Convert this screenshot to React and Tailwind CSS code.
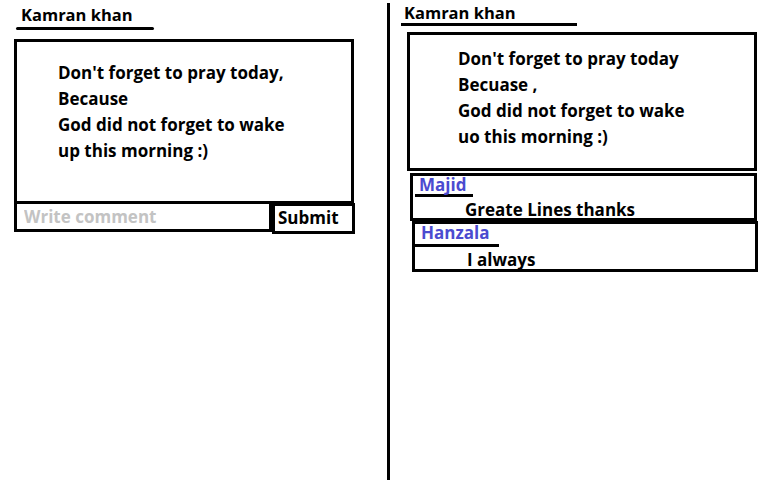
import React from "react";

const post = ["Don't forget to pray today,", "Because", "God did not forget to wake", "up this morning :)"];
const post2 = ["Don't forget to pray today", "Becuase ,", "God did not forget to wake", "uo this morning :)"];

const comments = [
  {
    name: "Majid",
    text: "Greate Lines thanks",
    line: "ml-[2px] w-[58px]",
    body: "pt-[1px]",
    box: "ml-[9px] mt-[2px] w-[347px] h-[48px]",
  },
  {
    name: "Hanzala",
    text: "I always",
    line: "-ml-[2px] mt-[2px] w-[86px]",
    body: "pt-[1px]",
    box: "ml-[11px] w-[346px] h-[51px]",
  },
];

export default function App() {
  return (
    <div className="flex h-[480px] w-[768px] overflow-hidden bg-white font-['Open_Sans',sans-serif] text-[17px] font-bold text-black">
      {/* left: post with comment input */}
      <div className="w-[387px] shrink-0 pl-[14px] pt-[5px]">
        <div className="pl-[7px] text-[16.5px] leading-[20px]">Kamran khan</div>
        <div className="ml-[2px] mt-[2px] h-[3px] w-[138px] rounded-full bg-black" />
        <div className="mt-[9px] h-[165px] w-[340px] border-[3px] border-black pl-[41px] pt-[18px] leading-[26px]">
          {post.map((l) => (
            <div key={l}>{l}</div>
          ))}
        </div>
        <div className="flex items-start">
          <input
            placeholder="Write comment"
            className="h-[28px] w-[258px] border-[3px] border-t-0 border-black pl-[7px] font-bold leading-[22px] outline-none placeholder:text-[#c3c3c3]"
          />
          <div className="-mt-[1px] h-[31px] w-[83px] border-[3px] border-black pl-[3px] leading-[24px]">Submit</div>
        </div>
      </div>

      {/* divider */}
      <div className="mt-[3px] h-[477px] w-[3px] shrink-0 bg-black" />

      {/* right: post with comments */}
      <div className="pl-[11px] pt-[3px]">
        <div className="pl-[3px] text-[16.5px] leading-[20px]">Kamran khan</div>
        <div className="h-[3px] w-[176px] bg-black" />
        <div className="ml-[6px] mt-[6px] h-[139px] w-[350px] border-[3px] border-black pl-[48px] pt-[11px] leading-[26px]">
          {post2.map((l) => (
            <div key={l}>{l}</div>
          ))}
        </div>
        {comments.map((c) => (
          <div key={c.name} className={`${c.box} border-[3px] border-black`}>
            <div className="pl-[6px] leading-[18px] text-[#4b4bd0]">{c.name}</div>
            <div className={`${c.line} h-[3px] bg-black`} />
            <div className={`${c.body} pl-[52px] leading-[24px]`}>{c.text}</div>
          </div>
        ))}
      </div>
    </div>
  );
}
